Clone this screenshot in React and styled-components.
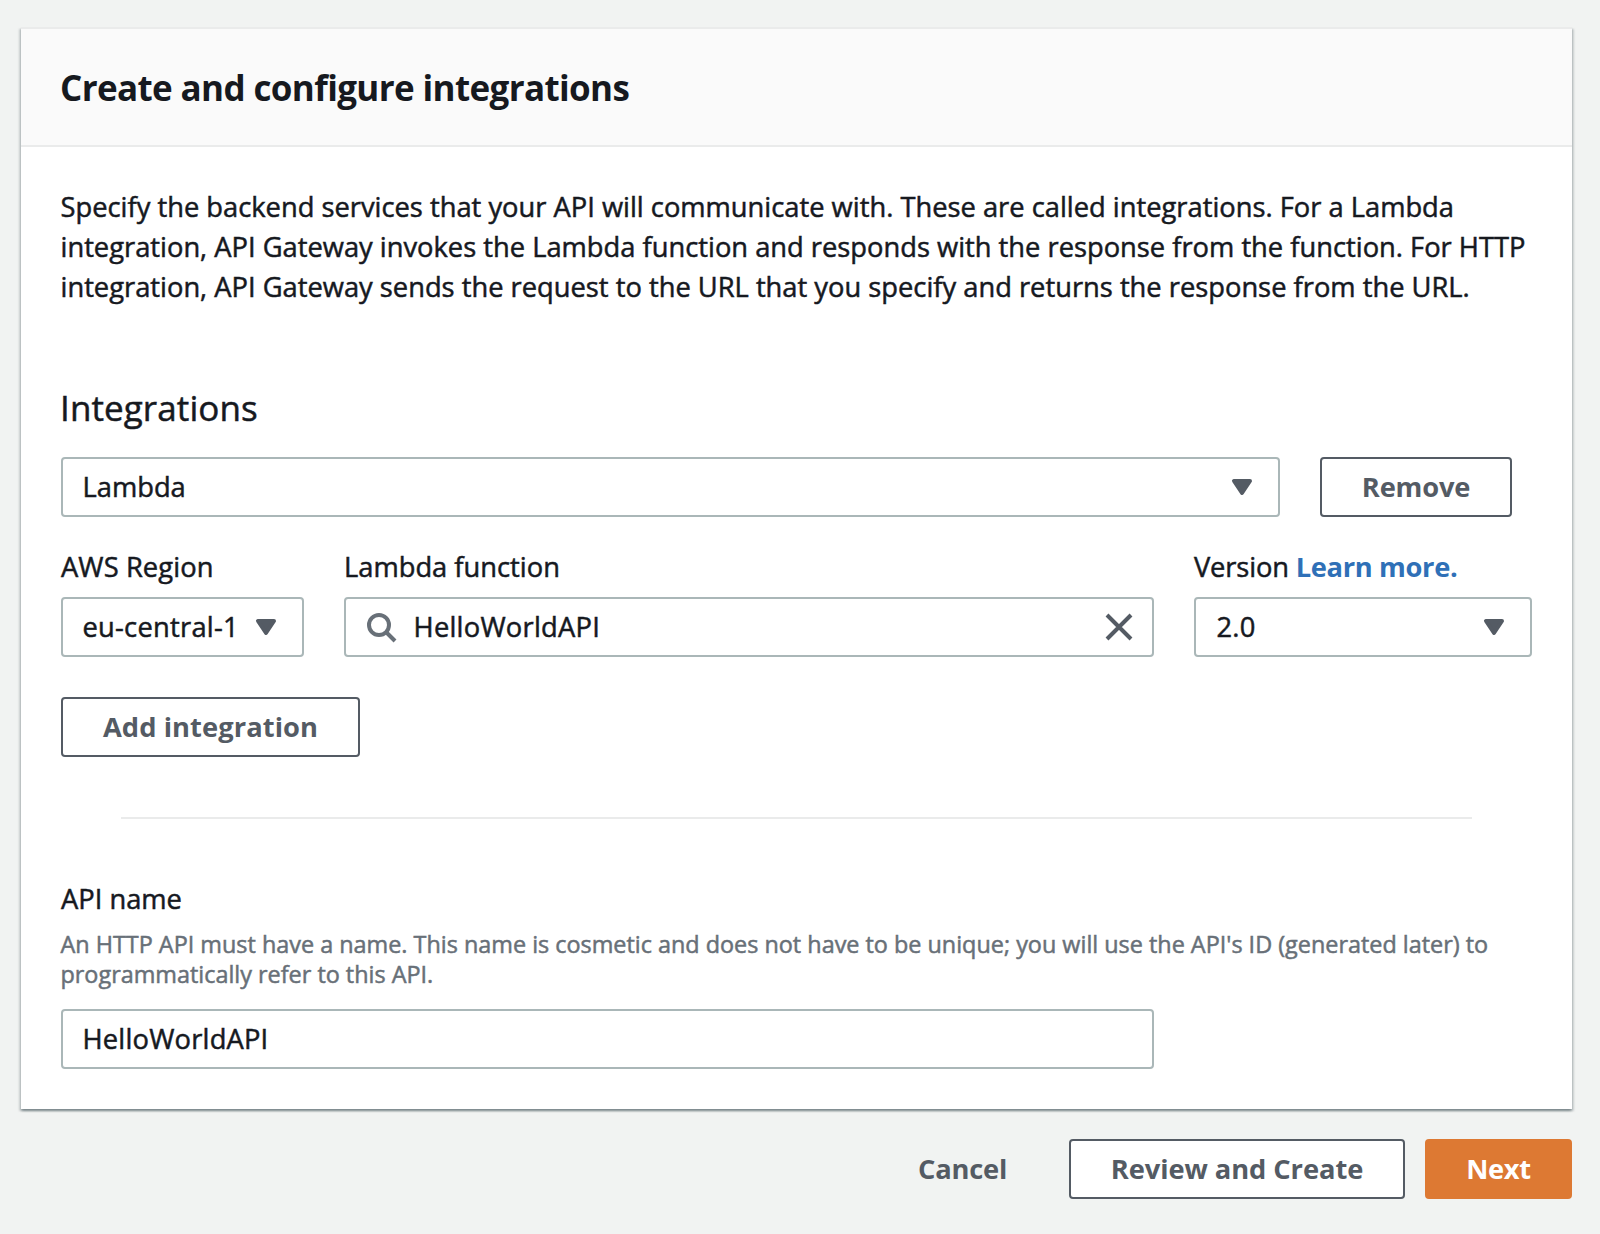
import React from "react";
import styled, { createGlobalStyle, css } from "styled-components";

const GlobalStyle = createGlobalStyle`
  *, *::before, *::after { box-sizing: border-box; }
  body {
    margin: 0;
    background: #f1f3f2;
    color: #16191f;
    font-family: "Open Sans", "Noto Sans", sans-serif;
    font-size: 27.3px;
    line-height: 40px;
    -webkit-text-stroke: 0.5px currentColor;
  }
`;

const Page = styled.main`
  min-height: 1234px;
  padding: 27px 28px 35px 21px;
`;

const Card = styled.section`
  background: #fff;
  border-top: 2px solid #eaebeb;
  box-shadow:
    0 2px 2px 0 rgba(0, 28, 36, 0.3),
    2px 2px 2px 0 rgba(0, 28, 36, 0.15),
    -2px 2px 2px 0 rgba(0, 28, 36, 0.15);
`;

const CardHeader = styled.header`
  display: flex;
  align-items: center;
  height: 118px;
  padding: 2px 39px 0;
  background: #fafafa;
  border-bottom: 2px solid #eaebeb;
`;

const Title = styled.h1`
  margin: 0;
  font-size: 35px;
  font-weight: 700;
  line-height: 44px;
  letter-spacing: -0.63px;
  -webkit-text-stroke: 0;
`;

const CardBody = styled.div`
  display: flex;
  flex-direction: column;
  padding: 40px;
`;

const Description = styled.p`
  margin: 0 0 78px -0.5px;
  white-space: nowrap;
`;

const SectionTitle = styled.h2`
  margin: 0 0 27px -1px;
  font-size: 35px;
  font-weight: 400;
  line-height: 45px;
  letter-spacing: 0.1px;
`;

const IntegrationRow = styled.div`
  display: flex;
  gap: 40px;
  margin-bottom: 30px;
`;

const FieldGrid = styled.div`
  display: grid;
  grid-template-columns: 243px 810px 338px;
  column-gap: 40px;
  margin-bottom: 40px;
`;

const Field = styled.div`
  display: flex;
  flex-direction: column;
  gap: 10px;
`;

const Label = styled.label`
  white-space: nowrap;
  letter-spacing: ${(p) => p.$track || 0}px;
`;

const Control = styled.div`
  display: flex;
  align-items: center;
  justify-content: space-between;
  width: ${(p) => (p.$width ? `${p.$width}px` : "auto")};
  height: 60px;
  padding: 0 ${(p) => (p.$search ? 17 : 20)}px 0 19px;
  background: #fff;
  border: 2px solid #aab7b8;
  border-radius: 4px;
`;

const Value = styled.span`
  flex: 1;
  white-space: nowrap;
  letter-spacing: ${(p) => p.$track || 0}px;
  margin-left: ${(p) => p.$indent || 0}px;
`;

const Button = styled.button`
  display: inline-flex;
  align-items: center;
  justify-content: center;
  width: ${(p) => p.$width}px;
  height: 60px;
  padding: 0;
  font: inherit;
  font-weight: 700;
  letter-spacing: ${(p) => p.$track || 0}px;
  -webkit-text-stroke: 0;
  white-space: nowrap;
  border: 2px solid #545b64;
  border-radius: 4px;
  background: #fff;
  color: #545b64;
  ${(p) =>
    p.$variant === "primary" &&
    css`
      background: #dd7933;
      border-color: #dd7933;
      color: #fff;
    `}
  ${(p) =>
    p.$variant === "link" &&
    css`
      background: transparent;
      border-color: transparent;
    `}
`;

const Link = styled.a`
  color: #2f70b7;
  font-weight: 700;
  letter-spacing: -0.35px;
  text-decoration: none;
  -webkit-text-stroke: 0;
`;

const Divider = styled.hr`
  width: 1351px;
  height: 2px;
  margin: 60px 0 60px 60px;
  border: 0;
  background: #eaebeb;
`;

const Hint = styled.p`
  margin: 0 0 10px -0.5px;
  color: #687078;
  font-size: 23.4px;
  line-height: 30px;
  white-space: nowrap;
`;

const Footer = styled.footer`
  display: flex;
  justify-content: flex-end;
  gap: 20px;
  margin-top: 30px;
`;

const Icon = styled.svg`
  flex: none;
  display: block;
  width: 32px;
  height: 32px;
  fill: none;
  stroke: ${(p) => p.$color || "#545b64"};
  stroke-width: 2;
`;

const Caret = () => (
  <Icon viewBox="0 0 16 16" aria-hidden="true">
    <path d="M4 5h8l-4 6-4-6z" fill="#545b64" strokeLinejoin="round" />
  </Icon>
);

const SearchIcon = () => (
  <Icon viewBox="0 0 16 16" $color="#687078" aria-hidden="true">
    <circle cx="7" cy="7" r="5" />
    <path d="m15 15-4.5-4.5" />
  </Icon>
);

const ClearIcon = () => (
  <Icon viewBox="0 0 16 16" aria-hidden="true">
    <path d="m2 2 12 12M14 2 2 14" />
  </Icon>
);

export default function App() {
  return (
    <Page>
      <GlobalStyle />
      <Card>
        <CardHeader>
          <Title>Create and configure integrations</Title>
        </CardHeader>
        <CardBody>
          <Description>
            Specify the backend services that your API will communicate with. These are called integrations. For a Lambda
            <br />
            integration, API Gateway invokes the Lambda function and responds with the response from the function. For HTTP
            <br />
            integration, API Gateway sends the request to the URL that you specify and returns the response from the URL.
          </Description>

          <SectionTitle>Integrations</SectionTitle>
          <IntegrationRow>
            <Control $width={1219}>
              <Value $indent={0.5}>Lambda</Value>
              <Caret />
            </Control>
            <Button $width={192} $track={-0.2}>Remove</Button>
          </IntegrationRow>

          <FieldGrid>
            <Field>
              <Label $track={0.1}>AWS Region</Label>
              <Control>
                <Value $indent={0.5} $track={0.25}>eu-central-1</Value>
                <Caret />
              </Control>
            </Field>
            <Field>
              <Label>Lambda function</Label>
              <Control $search>
                <SearchIcon />
                <Value $indent={16.5} $track={0.25}>HelloWorldAPI</Value>
                <ClearIcon />
              </Control>
            </Field>
            <Field>
              <Label $track={-0.15}>
                Version <Link>Learn more.</Link>
              </Label>
              <Control>
                <Value $indent={1.5} $track={0.2}>2.0</Value>
                <Caret />
              </Control>
            </Field>
          </FieldGrid>

          <Button $width={299} $track={0.08}>Add integration</Button>
          <Divider />

          <Field>
            <Label>API name</Label>
            <Hint>
              An HTTP API must have a name. This name is cosmetic and does not have to be unique; you will use the API's ID (generated later) to
              <br />
              programmatically refer to this API.
            </Hint>
            <Control $width={1093}>
              <Value $indent={0.5} $track={0.2}>HelloWorldAPI</Value>
            </Control>
          </Field>
        </CardBody>
      </Card>

      <Footer>
        <Button $width={173} $track={-0.2} $variant="link">Cancel</Button>
        <Button $width={336} $track={-0.08}>Review and Create</Button>
        <Button $width={147} $track={-0.3} $variant="primary">Next</Button>
      </Footer>
    </Page>
  );
}
